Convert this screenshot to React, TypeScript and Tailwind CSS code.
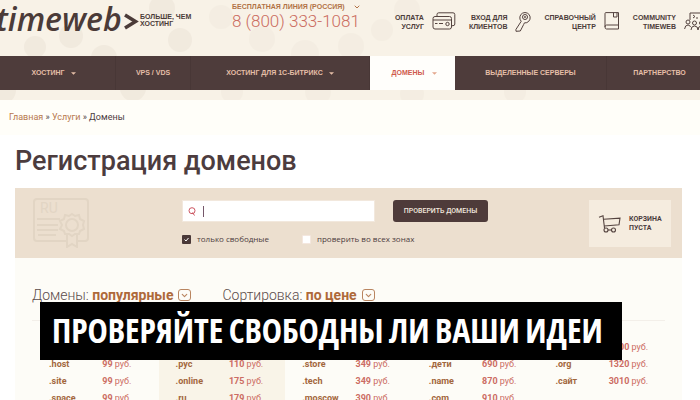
import React, { useState } from "react";
import { ChevronDown } from "lucide-react";

const menu = [
  { title: "ХОСТИНГ", arrow: true, active: false },
  { title: "VPS / VDS", arrow: false, active: false },
  { title: "ХОСТИНГ ДЛЯ 1С-БИТРИКС", arrow: true, active: false },
  { title: "ДОМЕНЫ", arrow: true, active: true },
  { title: "ВЫДЕЛЕННЫЕ СЕРВЕРЫ", arrow: false, active: false },
  { title: "ПАРТНЕРСТВО", arrow: false, active: false },
];

// each row is a list of [zone, price] pairs
const rows = [
  [["", ""], ["", ""], ["", ""], ["", ""], ["", "1200"]],
  [[".host", "99"], [".рус", "110"], [".store", "349"], [".дети", "690"], [".org", "1320"]],
  [[".site", "99"], [".online", "175"], [".tech", "349"], [".name", "870"], [".сайт", "3010"]],
  [[".space", "99"], [".ru", "179"], [".moscow", "390"], [".com", "910"], ["", ""]],
];

const HeaderPattern = () => (
  <svg className="absolute inset-0 h-full w-full" fill="#eee6da" aria-hidden="true">
    <g opacity="0.65">
      <circle cx="35" cy="47" r="11" />
      <circle cx="71" cy="36" r="12" />
      <circle cx="104" cy="58" r="13" />
      <circle cx="180" cy="40" r="12" />
      <circle cx="2" cy="90" r="14" />
      <circle cx="133" cy="88" r="13" />
      <circle cx="162" cy="8" r="13" />
    </g>
    <g opacity="0.35">
      <circle cx="221" cy="17" r="12" />
      <circle cx="262" cy="39" r="13" />
      <circle cx="305" cy="54" r="14" />
      <circle cx="351" cy="46" r="13" />
      <circle cx="382" cy="30" r="11" />
      <circle cx="407" cy="10" r="13" />
      <circle cx="232" cy="92" r="11" />
      <circle cx="318" cy="92" r="13" />
      <circle cx="412" cy="94" r="12" />
      <circle cx="515" cy="92" r="11" />
    </g>
  </svg>
);

const CardsIcon = () => (
  <svg className="h-[18px] w-6" viewBox="0 0 24 18" fill="none" stroke="#54433f" strokeWidth="1">
    <path d="M5 4V2.500Q5 .8 6.700 .8H21Q22.800 .8 22.800 2.500V12Q22.800 13.700 21 13.700H20" />
    <rect x="1" y="4.500" width="18.500" height="12.500" rx="2" />
    <path d="M1 8H19.500M3 11.500H5.500M7 11.500H11" />
    <circle cx="15.500" cy="12" r="1.700" />
  </svg>
);

const KeyIcon = () => (
  <svg className="h-5 w-4" viewBox="0 0 16 20" fill="none" stroke="#54433f" strokeWidth="1">
    <path d="M6.200 9.300A5.200 5.200 0 1 1 9.400 10.900L8.600 12.600 5.300 19 1 19.300 .9 17.500Z" />
    <circle cx="10" cy="5" r="2.500" />
    <circle cx="10" cy="5" r=".6" />
  </svg>
);

const BookIcon = () => (
  <svg className="h-[18px] w-4" viewBox="0 0 16 18" fill="none" stroke="#54433f" strokeWidth="1">
    <path d="M1 15V1.500Q1 .6 2 .6H14.500V13H2.500Q1 13 1 15 1 17 2.500 17H14.500M14.500 13V17M9.500 .6V5H13V.6" />
  </svg>
);

const CommunityIcon = () => (
  <svg className="h-[18px] w-7" viewBox="0 0 28 18" fill="none" stroke="#54433f" strokeWidth="1">
    <path d="M6 8V1H22V8M9 3L11 4.500 9 6M12 6H14" />
    <circle cx="4" cy="10" r="2" />
    <circle cx="10.500" cy="11" r="2" />
    <circle cx="17.500" cy="11" r="2" />
    <circle cx="24" cy="10" r="2" />
    <path d="M.6 17Q1 13 4 13 6 13 6.500 15M7 18Q7 14 10.500 14 14 14 14 18 14 14 17.500 14 21 14 21 18M21.500 15Q22 13 24 13 27 13 27.400 17" />
  </svg>
);

const CartIcon = () => (
  <svg className="h-[18px] w-6" viewBox="0 0 24 18" fill="none" stroke="#54433f" strokeWidth="1.100">
    <path d="M1 2.200L5 .8 6.500 13M5.500 4.200L22 3.200 21 9.800 6.200 11" />
    <circle cx="8" cy="15" r="2" />
    <circle cx="15.500" cy="15" r="2" />
    <path d="M10 15H13.500" />
  </svg>
);

const CertificateIcon = () => (
  <svg className="h-[50px] w-[58px]" viewBox="0 0 58 50" fill="none" stroke="#e2d5c4" strokeWidth="2">
    <path d="M35 43H5Q2 43 2 40V4Q2 1 5 1H53Q56 1 56 4V40Q56 43 53 43H46" />
    <path d="M5 21H28M5 27H26M5 32H26M6 37H24" />
    <path d="M40 16L43 18 47 17 48 21 52 23 51 27 52 31 48 33 47 36 43 36 40 38 37 36 33 36 32 33 28 31 30 27 28 23 32 21 33 17 37 18Z" />
    <circle cx="40" cy="27" r="6" />
    <path d="M35 37V49L40 46 45 49V37" />
    <text x="8" y="15" fontFamily="Roboto, sans-serif" fontSize="14" fill="#e2d5c4" stroke="none">RU</text>
  </svg>
);

type ServiceProps = {
  first: string;
  second: string;
  children: React.ReactNode;
};

const ServiceLink = ({ first, second, children }: ServiceProps) => (
  <a href="#" className="flex shrink-0 items-start gap-2 text-right text-[7px] leading-[9px] font-bold text-[#4c3c3a]">
    <span className="pt-px">
      {first}
      <br />
      {second}
    </span>
    {children}
  </a>
);

type SortProps = {
  label: string;
  value: string;
};

const SortButton = ({ label, value }: SortProps) => (
  <button type="button" className="flex items-center gap-[5px] text-sm leading-5 font-light text-[#5b4b4a]">
    <span>
      {label}: <b className="font-bold text-[#ae693a]">{value}</b>
    </span>
    <span className="flex h-3 w-[13px] items-center justify-center rounded-[3px] border border-[#b98560] text-[#b98560]">
      <ChevronDown size={9} strokeWidth={3} />
    </span>
  </button>
);

const App = () => {
  const [onlyFree, setOnlyFree] = useState(true);
  const [allZones, setAllZones] = useState(false);
  const [query, setQuery] = useState("");

  return (
    <div className="relative h-screen overflow-hidden bg-white font-[Roboto,sans-serif] text-[#4c3c3e]">
      <header className="relative bg-[#f8f2e7] pb-[10px] font-['Liberation_Sans',Arial,sans-serif]">
        <HeaderPattern />
        <div className="relative flex h-14 items-start">
          <a href="#" className="-ml-1 flex w-[236px] shrink-0 items-start text-[#4b3b38]">
            <span className="w-[127px] font-['Open_Sans','Noto_Sans',sans-serif] text-[32px] leading-[38px] font-semibold italic">
              timeweb
            </span>
            <svg className="mt-[13px] mr-px h-[17px] w-4" viewBox="0 0 16 17" fill="none" stroke="#4b3b38" strokeWidth="3.500">
              <path d="M2 2L12.500 8.500 2 15" />
            </svg>
            <span className="mt-[13px] text-[7px] leading-[7px] font-bold whitespace-nowrap">
              БОЛЬШЕ, ЧЕМ
              <br />
              ХОСТИНГ
            </span>
          </a>
          <div className="shrink-0 pt-[3px]">
            <button type="button" className="flex items-center gap-2 text-[7px] leading-[8px] font-bold text-[#b27346]">
              БЕСПЛАТНАЯ ЛИНИЯ (РОССИЯ)
              <ChevronDown size={8} strokeWidth={3} />
            </button>
            <a href="tel:88003331081" className="block font-[Roboto,sans-serif] text-[17px] leading-[21px] font-light text-[#cb6c60]">
              8 (800) 333-1081
            </a>
          </div>
          <div className="ml-auto -mr-3 flex shrink-0 gap-[13px] pt-3">
            <ServiceLink first="ОПЛАТА" second="УСЛУГ"><CardsIcon /></ServiceLink>
            <ServiceLink first="ВХОД ДЛЯ" second="КЛИЕНТОВ"><KeyIcon /></ServiceLink>
            <ServiceLink first="СПРАВОЧНЫЙ" second="ЦЕНТР"><BookIcon /></ServiceLink>
            <ServiceLink first="COMMUNITY" second="TIMEWEB"><CommunityIcon /></ServiceLink>
          </div>
        </div>

        <nav className="relative grid h-[34px] grid-cols-[116fr_75fr_179fr_85fr_152fr_93fr] bg-[#4e3c3b] text-[7px] font-bold text-[#e5bea7]">
          {menu.map((item) => (
            <a
              key={item.title}
              href="#"
              className={
                item.active
                  ? "flex items-center justify-center gap-2 bg-[#fffefb] pl-1 text-[#cf5a4d]"
                  : "flex items-center justify-center gap-[6px] border-r border-[#483736] whitespace-nowrap first:pr-2 last:border-r-0 last:pl-3"
              }
            >
              {item.title}
              {item.arrow && (
                <svg
                  className={item.active ? "h-[3px] w-[5px] text-[#e3a68c]" : "h-[3px] w-[5px]"}
                  viewBox="0 0 6 3"
                  fill="currentColor"
                >
                  <path d="M0 0H6L3 3Z" />
                </svg>
              )}
            </a>
          ))}
        </nav>
      </header>

      <div className="bg-[#fffef9] px-[9px] pt-[11px] pb-3 text-[9px] leading-[12px]">
        <a href="#" className="text-[#b8794e]">Главная</a> »{" "}
        <a href="#" className="text-[#b8794e]">Услуги</a> » Домены
      </div>

      <main className="pt-[9px] pr-[18px] pl-[15px]">
        <h1 className="text-[27px] leading-[34px] font-medium">Регистрация доменов</h1>

        <form
          className="mt-[10px] flex h-[70px] items-start bg-[#ecdfcf] pr-[11px] pl-[17px]"
          onSubmit={(e) => e.preventDefault()}
        >
          <div className="w-[150px] shrink-0 pt-[10px]">
            <CertificateIcon />
          </div>
          <div className="w-[211px] shrink-0 pt-3">
            <label className="flex h-[22px] w-[193px] items-center gap-[7px] border border-[#f2e8dd] bg-white pl-[5px]">
              <svg className="h-[9px] w-2" viewBox="0 0 8 9" fill="none" stroke="#cc5560" strokeWidth="1">
                <circle cx="4" cy="3.700" r="3" />
                <path d="M4.500 5.500L6.500 8.500" />
              </svg>
              <span className="h-[11px] w-px bg-[#75576a]" />
              <input
                type="text"
                aria-label="Имя домена"
                value={query}
                onChange={(e) => setQuery(e.target.value)}
                className="-ml-[7px] min-w-0 flex-1 text-[10px] outline-none"
              />
            </label>
            <div className="mt-3 flex items-center gap-[33px] font-['Open_Sans','Noto_Sans',sans-serif] text-[8px] leading-[10px] whitespace-nowrap">
              <label className="flex items-center gap-[6px]">
                <span className="relative flex h-[9px] w-[9px]">
                  <input
                    type="checkbox"
                    checked={onlyFree}
                    onChange={(e) => setOnlyFree(e.target.checked)}
                    className="h-[9px] w-[9px] appearance-none rounded-[1px] bg-white checked:bg-[#4a3938]"
                  />
                  {onlyFree && (
                    <svg className="pointer-events-none absolute inset-0" viewBox="0 0 9 9" fill="none" stroke="white">
                      <path d="M2.500 4.500L4 6 6.500 3" />
                    </svg>
                  )}
                </span>
                только свободные
              </label>
              <label className="flex items-center gap-[6px]">
                <input
                  type="checkbox"
                  checked={allZones}
                  onChange={(e) => setAllZones(e.target.checked)}
                  className="h-[9px] w-[9px] appearance-none rounded-[1px] border border-[#f4e7df] bg-white checked:bg-[#4a3938]"
                />
                проверить во всех зонах
              </label>
            </div>
          </div>
          <button
            type="submit"
            className="mt-3 h-[22px] w-[95px] shrink-0 rounded-[3px] bg-[#4e3b3a] text-[7px] font-medium whitespace-nowrap text-[#f3e9df]"
          >
            ПРОВЕРИТЬ ДОМЕНЫ
          </button>
          <a
            href="#"
            className="mt-3 ml-auto flex h-[47px] w-[82px] shrink-0 items-center gap-[7px] bg-[#f5ecdf] pl-[9px] text-[7px] leading-[9px] font-bold"
          >
            <CartIcon />
            <span>
              КОРЗИНА
              <br />
              ПУСТА
            </span>
          </a>
        </form>

        <section className="bg-[#fdfcf7] px-[17px] pt-[27px] pb-10">
          <div className="flex gap-[31px] border-b border-[#f3efe9] pb-[15px]">
            <SortButton label="Домены" value="популярные" />
            <SortButton label="Сортировка" value="по цене" />
          </div>
          <table className="mt-[18px] w-full table-fixed border-collapse text-left text-[9px] leading-[17px] whitespace-nowrap">
            <tbody>
              {rows.map((row, i) => (
                <tr key={i} className="h-[17px]">
                  {row.map(([zone, price], j) => (
                    <React.Fragment key={j}>
                      <th className={j === 1 ? "bg-[#f9f4e8] p-0 pl-[17px] font-bold text-[#a3673d]" : "p-0 pl-[17px] font-bold text-[#a3673d]"}>
                        {zone}
                      </th>
                      <td className={j === 1 ? "bg-[#f9f4e8] p-0 pl-[7px] text-[#cc6c63]" : "p-0 pl-[7px] text-[#cc6c63]"}>
                        {price && (
                          <>
                            <b className="font-bold">{price}</b> руб.
                          </>
                        )}
                      </td>
                    </React.Fragment>
                  ))}
                </tr>
              ))}
            </tbody>
          </table>
        </section>
      </main>

      {/* caption over the page */}
      <p className="absolute top-[302px] left-10 flex h-[58px] w-[582px] items-center bg-black pt-1 pl-3 font-['Bebas_Neue','Noto_Sans_ExtraCondensed','Noto_Sans_Extra_Condensed','Open_Sans_Condensed','Roboto_Condensed',sans-serif] text-[34px] leading-none font-bold whitespace-nowrap text-white">
        ПРОВЕРЯЙТЕ СВОБОДНЫ ЛИ ВАШИ ИДЕИ
      </p>
    </div>
  );
};

export default App;
